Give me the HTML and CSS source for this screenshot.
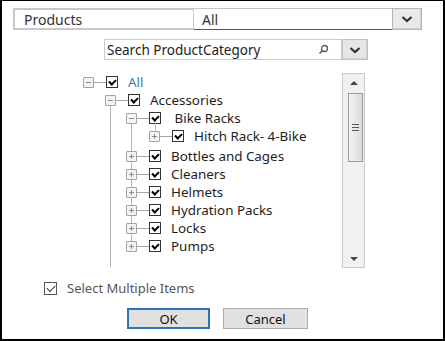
FILE: index.html
```html
<!DOCTYPE html>
<html lang="en">

<head>
    <meta charset="UTF-8">
    <meta name="viewport" content="width=device-width, initial-scale=1.0">
    <title>Products filter</title>
    <link rel="stylesheet" href="styles.css">
</head>

<body>
    <div class="dialog">
        <div class="field">
            <div class="field-name">Products</div>
            <div class="field-value">All</div>
            <a href="#" class="drop">
                <svg width="12" height="8" viewBox="0 0 12 8"><polyline points="1.5,2 6,6 10.5,2" fill="none" stroke="#333" stroke-width="2.2"/></svg>
            </a>
        </div>

        <div class="search">
            <div class="search-box">
                <span>Search ProductCategory</span>
                <svg width="11" height="11" viewBox="0 0 11 11"><circle cx="6.5" cy="4.5" r="3" fill="none" stroke="#555" stroke-width="1.3"/><line x1="4.4" y1="6.6" x2="1.5" y2="9.5" stroke="#555" stroke-width="1.5"/></svg>
            </div>
            <a href="#" class="drop small">
                <svg width="12" height="8" viewBox="0 0 12 8"><polyline points="1.5,2 6,6 10.5,2" fill="none" stroke="#333" stroke-width="2.2"/></svg>
            </a>
        </div>

        <div class="tree-area">
            <div class="tree">
                <div class="row">
                    <span class="exp"></span><span class="link"></span><span class="cb on"></span><span class="name all">All</span>
                </div>
                <div class="row lvl1">
                    <span class="exp"></span><span class="link"></span><span class="cb on"></span><span class="name">Accessories</span>
                </div>
                <div class="group">
                    <div class="sub">
                        <div class="row lvl2">
                            <span class="exp"></span><span class="link"></span><span class="cb on"></span><span class="name">&nbsp;Bike Racks</span>
                        </div>
                        <div class="row lvl3 hitch">
                            <span class="exp plus"></span><span class="link"></span><span class="cb on"></span><span class="name">Hitch Rack- 4-Bike</span>
                        </div>
                        <div class="row lvl2 gap">
                            <span class="exp plus"></span><span class="link"></span><span class="cb on"></span><span class="name">Bottles and Cages</span>
                        </div>
                        <div class="row lvl2">
                            <span class="exp plus"></span><span class="link"></span><span class="cb on"></span><span class="name">Cleaners</span>
                        </div>
                        <div class="row lvl2">
                            <span class="exp plus"></span><span class="link"></span><span class="cb on"></span><span class="name">Helmets</span>
                        </div>
                        <div class="row lvl2">
                            <span class="exp plus"></span><span class="link"></span><span class="cb on"></span><span class="name">Hydration Packs</span>
                        </div>
                        <div class="row lvl2">
                            <span class="exp plus"></span><span class="link"></span><span class="cb on"></span><span class="name">Locks</span>
                        </div>
                        <div class="row lvl2">
                            <span class="exp plus"></span><span class="link"></span><span class="cb on"></span><span class="name">Pumps</span>
                        </div>
                    </div>
                </div>
            </div>
            <div class="scrollbar">
                <span class="arrow up"></span>
                <div class="thumb"><i></i><i></i><i></i></div>
                <span class="arrow down"></span>
            </div>
        </div>

        <label class="multi">
            <span class="cb light"></span>
            <span>Select Multiple Items</span>
        </label>

        <div class="buttons">
            <a href="#" class="btn ok">OK</a>
            <a href="#" class="btn">Cancel</a>
        </div>
    </div>
</body>

</html>
```

FILE: styles.css
```css
* {
    padding: 0;
    margin: 0;
    box-sizing: border-box;
}

a {
    text-decoration: none;
    color: inherit;
}

body {
    font-family: "Noto Sans", "Open Sans", sans-serif;
    font-size: 13px;
    color: #1e1e1e;
    background: #fff;
}

.dialog {
    width: 445px;
    height: 341px;
    border: 2px solid #000;
    border-top-width: 1px;
    padding-top: 7px;
    display: flex;
    flex-direction: column;
}

/* top field */
.field {
    display: flex;
    height: 22px;
    margin-left: 11px;
    width: 409px;
}

.field-name,
.field-value {
    display: flex;
    align-items: center;
    font-size: 14px;
    color: #333;
    border: 1px solid #c4c4c4;
}

.field-name {
    width: 181px;
    padding-left: 9px;
    border: 2px solid #c8c8c8;
    border-right-width: 1px;
}

.field-value {
    width: 198px;
    padding-left: 8px;
    border-left: none;
    border-right: none;
    border-bottom: 1px solid #555;
}

.drop {
    display: flex;
    align-items: center;
    justify-content: center;
    width: 30px;
    background: #e9e9e9;
    border: 1px solid #b5b5b5;
    box-shadow: inset -1px -1px 0 #d0d0d0;
}

/* search */
.search {
    display: flex;
    height: 21px;
    margin: 9px 0 0 102px;
    width: 264px;
}

.search-box {
    flex: 1;
    display: flex;
    align-items: center;
    justify-content: space-between;
    padding: 0 12px 0 2px;
    border: 1px solid #cbcbcb;
    color: #222;
    font-size: 13.5px;
}

.drop.small {
    width: 26px;
    background: #e6e6e6;
    border-color: #c2c2c2;
}

/* tree */
.tree-area {
    display: flex;
    margin: 13px 0 0 78px;
    width: 285px;
    height: 195px;
}

.tree {
    flex: 1;
    padding-left: 3px;
    font-size: 13.4px;
}

.row {
    position: relative;
    display: flex;
    align-items: center;
    height: 18px;
    white-space: nowrap;
}

.lvl1 {
    padding-left: 22px;
}

.lvl2 {
    padding-left: 43px;
}

.lvl3 {
    padding-left: 66px;
}

.gap {
    margin-top: 2px;
}

.exp {
    position: relative;
    width: 11px;
    height: 11px;
    border: 1px solid #a3a3a3;
    border-radius: 1px;
    background: #f4f4f4;
    flex: none;
}

.exp::before {
    content: '';
    position: absolute;
    left: 2px;
    right: 2px;
    top: 4px;
    height: 1px;
    background: #8a8a8a;
}

.exp.plus::after {
    content: '';
    position: absolute;
    top: 2px;
    bottom: 2px;
    left: 4px;
    width: 1px;
    background: #8a8a8a;
}

.link {
    width: 12px;
    height: 1px;
    background: #a8a8a8;
    flex: none;
}

.cb {
    position: relative;
    width: 12px;
    height: 12px;
    border: 1px solid #333;
    background: #fff;
    flex: none;
}

.cb.on::after {
    content: '';
    position: absolute;
    left: 2px;
    top: 1px;
    width: 5px;
    height: 3px;
    border-left: 2px solid #000;
    border-bottom: 2px solid #000;
    transform: translate(0, 1px) rotate(-45deg);
    transform-origin: 50% 50%;
}

.name {
    margin-left: 10px;
}

.name.all {
    color: #3b7ba3;
}

.group,
.sub {
    position: relative;
}

.group {
    padding-bottom: 12px;
}

.group::before {
    content: '';
    position: absolute;
    left: 27px;
    top: -3px;
    bottom: 0;
    border-left: 1px solid #b4b4b4;
}

.sub::before {
    content: '';
    position: absolute;
    left: 48px;
    top: 9px;
    bottom: 9px;
    border-left: 1px solid #b4b4b4;
}

.hitch::before {
    content: '';
    position: absolute;
    left: 72px;
    top: -4px;
    height: 8px;
    border-left: 1px solid #b4b4b4;
}

/* scrollbar */
.scrollbar {
    position: relative;
    width: 23px;
    border: 1px solid #cacaca;
    background: #f1f1f1;
    display: flex;
    flex-direction: column;
    align-items: center;
}

.arrow {
    width: 0;
    height: 0;
    border-left: 4px solid transparent;
    border-right: 4px solid transparent;
}

.arrow.up {
    margin-top: 7px;
    border-bottom: 4px solid #444;
}

.arrow.down {
    margin-top: auto;
    margin-bottom: 6px;
    border-top: 4px solid #444;
}

.thumb {
    margin-top: 8px;
    margin-left: 4px;
    width: 15px;
    height: 69px;
    border: 1px solid #9c9c9c;
    background: linear-gradient(to right, #f4f4f4, #dcdcdc);
    display: flex;
    flex-direction: column;
    align-items: center;
    justify-content: center;
    gap: 2px;
}

.thumb i {
    width: 7px;
    height: 1px;
    background: #555;
}

/* bottom */
.multi {
    display: flex;
    align-items: center;
    gap: 10px;
    margin: 13px 0 0 42px;
    color: #555;
    height: 14px;
}

.cb.light {
    width: 13px;
    height: 13px;
    border-color: #555;
}

.cb.light::after {
    content: '';
    position: absolute;
    left: 2px;
    top: 1px;
    width: 7px;
    height: 4px;
    border-left: 1px solid #333;
    border-bottom: 1px solid #333;
    transform: translate(0, 1px) rotate(-45deg);
}

.buttons {
    display: flex;
    gap: 13px;
    margin: 13px 0 0 125px;
}

.btn {
    display: flex;
    align-items: center;
    justify-content: center;
    height: 21px;
    width: 85px;
    background: #e1e1e1;
    border: 1px solid #adadad;
    color: #111;
}

.btn.ok {
    width: 83px;
    border: 2px solid #2f73b5;
}
```
